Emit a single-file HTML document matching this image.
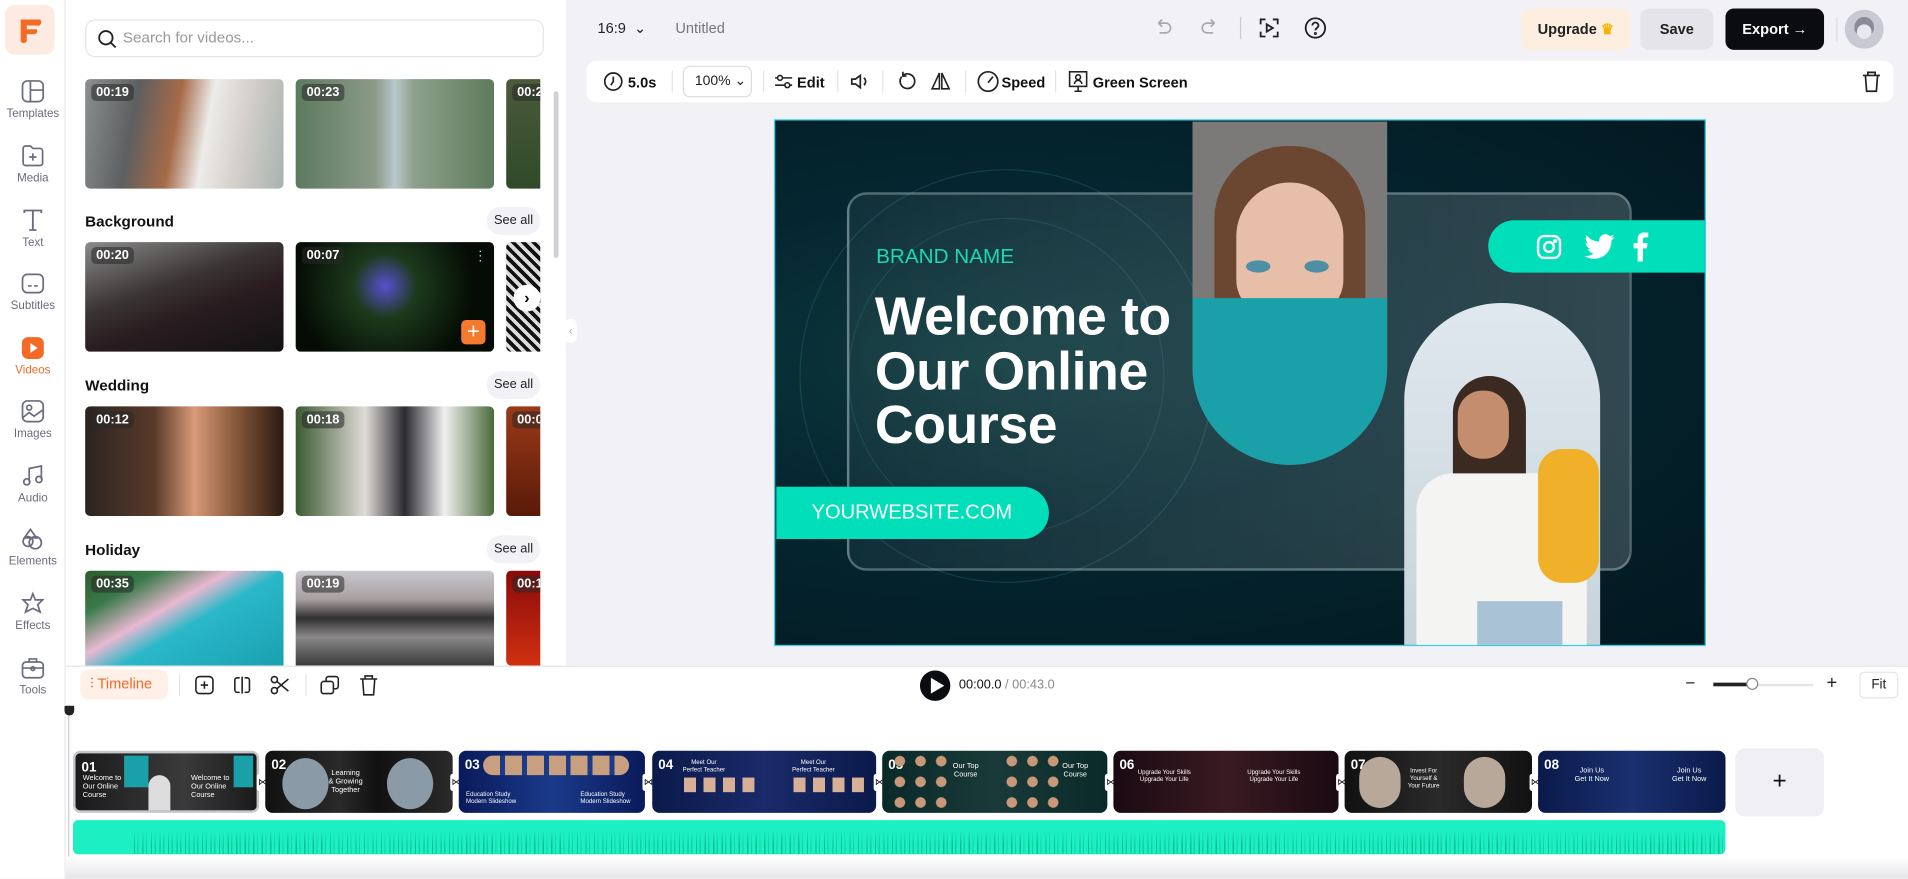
<!DOCTYPE html>
<html><head><meta charset="utf-8"><style>
*{box-sizing:border-box;margin:0;padding:0}
html,body{width:1908px;height:879px;overflow:hidden;background:#f2f2f6;font-family:"Liberation Sans",sans-serif}
#s{position:absolute;left:0;top:0;width:1568px;height:722px;transform:scale(1.21684);transform-origin:0 0;background:#f2f2f6}
.a{position:absolute}
.rail{left:0;top:0;width:54px;height:722px;background:#fff;border-right:1px solid #e8e8ee}
.ri{position:absolute;left:0;width:54px;text-align:center;font-size:9.5px;color:#6b6b80}
.ri svg{display:block;margin:0 auto 3px}
.panel{left:54px;top:0;width:411px;height:547px;background:#fff}
.th{position:absolute;width:163px;height:90px;border-radius:4px;overflow:hidden}
.th.c{width:28px;border-radius:4px 0 0 4px}
.du{position:absolute;left:5px;top:4px;background:rgba(40,40,40,.55);color:#fff;font-size:10.5px;font-weight:bold;padding:1px 4px;border-radius:4px}
.h{position:absolute;left:70px;font-size:12.5px;font-weight:bold;color:#111}
.sa{position:absolute;left:400px;width:44px;height:23px;border-radius:12px;background:#f2f2f6;font-size:10.5px;color:#222;text-align:center;line-height:23px}
.tb{font-size:12px;font-weight:bold;color:#111}
.clip{position:absolute;top:617px;height:51px;border-radius:6px;overflow:hidden}
.clip b{position:absolute;left:5px;top:6px;color:#fff;font-size:11px}
.clip i{position:absolute;font-style:normal;color:#fff;font-size:5px;line-height:6px;text-align:center}
.tr{position:absolute;top:636px;width:10px;height:14px;background:#fff;border-radius:2px;font-size:8px;line-height:14px;text-align:center;color:#111}
</style></head><body><div id="s">

<!-- top header -->
<div class="a" style="left:491px;top:16px;font-size:12px;color:#222">16:9 &nbsp;⌄</div>
<div class="a" style="left:555px;top:16px;font-size:12px;color:#777">Untitled</div>
<svg class="a" style="left:948px;top:15px" width="16" height="16" viewBox="0 0 16 16" fill="none" stroke="#aaa" stroke-width="1.4"><path d="M4 4h6a4 4 0 010 8H5M4 4l3-3M4 4l3 3"/></svg>
<svg class="a" style="left:986px;top:15px" width="16" height="16" viewBox="0 0 16 16" fill="none" stroke="#aaa" stroke-width="1.4"><path d="M12 4H6a4 4 0 000 8h5M12 4L9 1M12 4L9 7"/></svg>
<div class="a" style="left:1019px;top:14px;width:1px;height:18px;background:#ccc"></div>
<svg class="a" style="left:1034px;top:14px" width="18" height="18" viewBox="0 0 18 18" fill="none" stroke="#222" stroke-width="1.5"><path d="M2 6V2h4M12 2h4v4M16 12v4h-4M6 16H2v-4"/><path d="M7 6l5 3-5 3z"/></svg>
<svg class="a" style="left:1072px;top:14px" width="18" height="18" viewBox="0 0 18 18" fill="none" stroke="#222" stroke-width="1.5"><circle cx="9" cy="9" r="8"/><path d="M6.5 7a2.5 2.5 0 115 0c0 2-2.5 2-2.5 4"/><circle cx="9" cy="13.5" r=".5"/></svg>
<div class="a" style="left:1250px;top:7px;width:90px;height:34px;border-radius:7px;background:#fdeee0;font-size:12px;font-weight:bold;line-height:34px;text-align:center;color:#222">Upgrade <span style="color:#f5b400">♛</span></div>
<div class="a" style="left:1348px;top:7px;width:60px;height:34px;border-radius:7px;background:#e4e4ea;font-size:12px;font-weight:bold;line-height:34px;text-align:center;color:#222">Save</div>
<div class="a" style="left:1418px;top:7px;width:81px;height:34px;border-radius:7px;background:#0a0c10;font-size:12px;font-weight:bold;line-height:34px;text-align:center;color:#fff">Export →</div>
<div class="a" style="left:1509px;top:14px;width:1px;height:20px;background:#ddd"></div>
<div class="a" style="left:1516px;top:8px;width:32px;height:32px;border-radius:50%;background:#c9c9d4;overflow:hidden"><div class="a" style="left:8px;top:6px;width:16px;height:14px;border-radius:8px 8px 4px 4px;background:#8a8a98"></div><div class="a" style="left:10px;top:12px;width:12px;height:12px;border-radius:50%;background:#e8e8ee"></div></div>

<!-- toolbar -->
<div class="a" style="left:482px;top:50px;width:1074px;height:34px;background:#fff;border-radius:8px"></div>
<svg class="a" style="left:496px;top:59px" width="16" height="16" viewBox="0 0 16 16" fill="none" stroke="#222" stroke-width="1.4"><circle cx="8" cy="8" r="7"/><path d="M8 4v4l-2 3"/></svg>
<div class="a tb" style="left:516px;top:61px">5.0s</div>
<div class="a" style="left:552px;top:58px;width:1px;height:18px;background:#e4e4e4"></div>
<div class="a" style="left:561px;top:54px;width:57px;height:26px;border:1px solid #ddd;border-radius:6px;font-size:11.5px;line-height:24px;padding-left:9px;color:#222">100% ⌄</div>
<div class="a" style="left:627px;top:58px;width:1px;height:18px;background:#e4e4e4"></div>
<svg class="a" style="left:636px;top:59px" width="16" height="16" viewBox="0 0 16 16" fill="none" stroke="#222" stroke-width="1.3"><path d="M1 5h14M1 11h14"/><circle cx="5" cy="5" r="2" fill="#fff"/><circle cx="11" cy="11" r="2" fill="#fff"/></svg>
<div class="a tb" style="left:655px;top:61px">Edit</div>
<div class="a" style="left:688px;top:58px;width:1px;height:18px;background:#e4e4e4"></div>
<svg class="a" style="left:698px;top:59px" width="16" height="16" viewBox="0 0 16 16" fill="none" stroke="#222" stroke-width="1.4"><path d="M2 6h3l4-3v10l-4-3H2zM12 5a4 4 0 010 6"/></svg>
<div class="a" style="left:725px;top:58px;width:1px;height:18px;background:#e4e4e4"></div>
<svg class="a" style="left:737px;top:58px" width="16" height="18" viewBox="0 0 16 18" fill="none" stroke="#222" stroke-width="1.4"><path d="M5 4a6 6 0 11-1 1M5 1v3.5H8"/></svg>
<svg class="a" style="left:764px;top:58px" width="18" height="18" viewBox="0 0 18 18" fill="none" stroke="#222" stroke-width="1.3"><path d="M8 2L2 15h6zM10 2l6 13h-6z"/></svg>
<div class="a" style="left:793px;top:58px;width:1px;height:18px;background:#e4e4e4"></div>
<svg class="a" style="left:803px;top:58px" width="18" height="18" viewBox="0 0 18 18" fill="none" stroke="#222" stroke-width="1.4"><circle cx="9" cy="9" r="8"/><path d="M9 10l4-5"/></svg>
<div class="a tb" style="left:823px;top:61px">Speed</div>
<div class="a" style="left:867px;top:58px;width:1px;height:18px;background:#e4e4e4"></div>
<svg class="a" style="left:878px;top:57px" width="16" height="20" viewBox="0 0 16 20" fill="none" stroke="#222" stroke-width="1.3"><rect x="1" y="2" width="14" height="12"/><circle cx="8" cy="6.5" r="2"/><path d="M5 12a3 3 0 016 0M8 14v4M5 18h6"/></svg>
<div class="a tb" style="left:898px;top:61px">Green Screen</div>
<svg class="a" style="left:1530px;top:58px" width="16" height="18" viewBox="0 0 16 18" fill="none" stroke="#222" stroke-width="1.4"><path d="M1 4h14M5 4V1.5h6V4M3 4l1 13h8l1-13"/></svg>

<!-- canvas -->
<div class="a" style="left:636px;top:98px;width:766px;height:433px;border:1.5px solid #2ed3ea;background:radial-gradient(ellipse at 25% 45%,#0d3a3e 0%,#052630 40%,#021820 100%);overflow:hidden">
 <div class="a" style="left:20px;top:40px;width:340px;height:340px;border-radius:50%;border:1px solid rgba(60,140,140,.25)"></div>
 <div class="a" style="left:60px;top:80px;width:260px;height:260px;border-radius:50%;border:1px solid rgba(60,140,140,.2)"></div>
 <div class="a" style="left:59px;top:59px;width:645px;height:311px;border-radius:16px;border:2px solid rgba(200,220,220,.35);background:linear-gradient(90deg,rgba(255,255,255,.05),rgba(255,255,255,.18))"></div>
 <div class="a" style="left:343px;top:1px;width:160px;height:282px;border-radius:0 0 80px 80px;overflow:hidden;background:#7c7a78">
   <div class="a" style="left:18px;top:20px;width:124px;height:200px;border-radius:60px 60px 20px 20px;background:#6b4630"></div>
   <div class="a" style="left:36px;top:50px;width:88px;height:110px;border-radius:44px 44px 30px 30px;background:#e7bfa9"></div>
   <div class="a" style="left:44px;top:114px;width:20px;height:10px;border-radius:50%;background:#4f8fa6"></div>
   <div class="a" style="left:92px;top:114px;width:20px;height:10px;border-radius:50%;background:#4f8fa6"></div>
   <div class="a" style="left:0;top:145px;width:160px;height:140px;background:#1aa0a8"></div>
 </div>
 <div class="a" style="left:586px;top:82px;width:178px;height:43px;border-radius:22px 0 0 22px;background:#00dfb9"></div>
 <svg class="a" style="left:625px;top:93px" width="22" height="22" viewBox="0 0 22 22" fill="none" stroke="#fff" stroke-width="2"><rect x="2" y="2" width="18" height="18" rx="5"/><circle cx="11" cy="11" r="4"/><circle cx="16" cy="6" r=".8" fill="#fff"/></svg>
 <svg class="a" style="left:665px;top:93px" width="26" height="22" viewBox="0 0 24 20" fill="#fff"><path d="M23 2.5a9 9 0 01-2.7.7A4.7 4.7 0 0022.4.6a9 9 0 01-3 1.1A4.7 4.7 0 0011.4 6 13.3 13.3 0 011.7 1.1a4.7 4.7 0 001.5 6.3A4.6 4.6 0 011 6.8a4.7 4.7 0 003.8 4.6 4.7 4.7 0 01-2.1.1 4.7 4.7 0 004.4 3.3A9.4 9.4 0 010 16.7 13.3 13.3 0 007.2 19c8.6 0 13.4-7.2 13.4-13.4v-.6A9.5 9.5 0 0023 2.5z"/></svg>
 <svg class="a" style="left:704px;top:92px" width="14" height="24" viewBox="0 0 12 22" fill="#fff"><path d="M8 22V12h3l.5-4H8V5.5C8 4.4 8.3 3.7 10 3.7h2V.2A25 25 0 009 0C6.2 0 4 1.7 4 4.9V8H1v4h3v10z"/></svg>
 <div class="a" style="left:517px;top:150px;width:161px;height:282px;border-radius:80px 80px 0 0;overflow:hidden;background:linear-gradient(180deg,#dfe8ee,#c7d3da)">
   <div class="a" style="left:40px;top:60px;width:60px;height:120px;border-radius:30px;background:#3b2a22"></div>
   <div class="a" style="left:44px;top:72px;width:42px;height:56px;border-radius:20px;background:#c48e6e"></div>
   <div class="a" style="left:10px;top:140px;width:140px;height:150px;border-radius:30px 30px 0 0;background:#f4f4f2"></div>
   <div class="a" style="left:110px;top:120px;width:50px;height:110px;border-radius:20px;background:#f0b02a"></div>
   <div class="a" style="left:60px;top:245px;width:70px;height:40px;background:#a9c2d6"></div>
 </div>
 <div class="a" style="left:83px;top:102px;font-size:17px;color:#1ed8b2">BRAND NAME</div>
 <div class="a" style="left:82px;top:140px;font-size:44px;line-height:44.5px;color:#fff;font-weight:bold;letter-spacing:-.3px">Welcome to<br>Our Online<br>Course</div>
 <div class="a" style="left:1px;top:301px;width:224px;height:43px;border-radius:0 22px 22px 0;background:#00dfb9;color:#fff;font-size:16.5px;line-height:43px;padding-left:29px">YOURWEBSITE.COM</div>
</div>

<!-- left rail -->
<div class="a rail">
 <div class="a" style="left:4px;top:4px;width:41px;height:41px;border-radius:8px;background:#fdebe2"><svg width="41" height="41" viewBox="0 0 41 41" fill="#f36a26"><path d="M13 12h16a3 3 0 01-3 5h-8v3h8a2.5 2.5 0 01-2.5 4H18v6a3 3 0 01-5 0z"/></svg></div>
 <div class="ri" style="top:65px"><svg width="20" height="20" viewBox="0 0 20 20" fill="none" stroke="#6b6b80" stroke-width="1.4"><rect x="1.5" y="1.5" width="17" height="17" rx="4"/><path d="M8 1.5v17M8 9h10.5"/></svg>Templates</div>
 <div class="ri" style="top:118px"><svg width="20" height="20" viewBox="0 0 20 20" fill="none" stroke="#6b6b80" stroke-width="1.4"><path d="M2 4a2 2 0 012-2h4l2 2h6a2 2 0 012 2v10a2 2 0 01-2 2H4a2 2 0 01-2-2z"/><path d="M10 8v6M7 11h6"/></svg>Media</div>
 <div class="ri" style="top:171px"><svg width="20" height="20" viewBox="0 0 20 20" fill="none" stroke="#6b6b80" stroke-width="1.5"><path d="M3 4V2h14v2M10 2v16M7 18h6"/></svg>Text</div>
 <div class="ri" style="top:223px"><svg width="20" height="20" viewBox="0 0 20 20" fill="none" stroke="#6b6b80" stroke-width="1.4"><rect x="1.5" y="2.5" width="17" height="15" rx="4"/><path d="M6 12h3M11 12h3"/></svg>Subtitles</div>
 <div class="ri" style="top:276px;color:#f36a26"><svg width="20" height="20" viewBox="0 0 20 20"><rect x="1" y="1" width="18" height="18" rx="5" fill="#f36a26"/><path d="M8 6l6 4-6 4z" fill="#fff"/></svg>Videos</div>
 <div class="ri" style="top:328px"><svg width="20" height="20" viewBox="0 0 20 20" fill="none" stroke="#6b6b80" stroke-width="1.4"><rect x="1.5" y="1.5" width="17" height="17" rx="4"/><circle cx="7" cy="7" r="2"/><path d="M2 15l5-4 4 3 7-5"/></svg>Images</div>
 <div class="ri" style="top:381px"><svg width="20" height="20" viewBox="0 0 20 20" fill="none" stroke="#6b6b80" stroke-width="1.4"><path d="M7 15V4l10-2v11"/><circle cx="5" cy="15" r="2.5"/><circle cx="15" cy="13" r="2.5"/></svg>Audio</div>
 <div class="ri" style="top:433px"><svg width="20" height="20" viewBox="0 0 20 20" fill="none" stroke="#6b6b80" stroke-width="1.4"><path d="M8 2l5 7H3z"/><circle cx="12" cy="13" r="5"/><circle cx="6" cy="12" r="4"/></svg>Elements</div>
 <div class="ri" style="top:486px"><svg width="20" height="20" viewBox="0 0 20 20" fill="none" stroke="#6b6b80" stroke-width="1.4"><path d="M10 2l2 5 6 0-4 4 2 6-6-3-6 3 2-6-4-4 6 0z"/></svg>Effects</div>
 <div class="ri" style="top:539px"><svg width="20" height="20" viewBox="0 0 20 20" fill="none" stroke="#6b6b80" stroke-width="1.4"><rect x="1.5" y="5" width="17" height="13" rx="3"/><path d="M7 5V2.5h6V5M1.5 10h17"/><circle cx="10" cy="10.5" r="1.5"/></svg>Tools</div>
</div>

<!-- panel -->
<div class="a panel">
 <div class="a" style="left:16px;top:16px;width:377px;height:31px;border:1px solid #e4e4ea;border-radius:8px"></div>
 <svg class="a" style="left:26px;top:24px" width="16" height="16" viewBox="0 0 16 16" fill="none" stroke="#222" stroke-width="1.5"><circle cx="7" cy="7" r="5.5"/><path d="M11 11l4 4"/></svg>
 <div class="a" style="left:47px;top:24px;font-size:12.5px;color:#999">Search for videos...</div>
 <div class="a" style="left:401px;top:75px;width:4px;height:137px;border-radius:2px;background:#d0d0d6"></div>
</div>
<div class="a" style="left:464px;top:262px;width:10px;height:20px;border-radius:5px;background:#fff;color:#aaa;font-size:9px;line-height:20px;text-align:center">‹</div>

<div class="th" style="left:70px;top:65px;background:linear-gradient(100deg,#8c8f90 0%,#5d5f60 25%,#a66a48 45%,#ececea 60%,#d8d2cc 75%,#a8b2b0 100%)"><div class="du">00:19</div></div>
<div class="th" style="left:243px;top:65px;background:linear-gradient(90deg,#5c7a5e,#8c9a88 40%,#b8c8cc 50%,#8ca08a 60%,#5e7a5c)"><div class="du">00:23</div></div>
<div class="th c" style="left:416px;top:65px;background:linear-gradient(#4b5a3b,#2f4a2a)"><div class="du">00:2</div></div>

<div class="h" style="top:175px">Background</div><div class="sa" style="top:170px">See all</div>
<div class="th" style="left:70px;top:199px;background:linear-gradient(160deg,#8a8a8a 0%,#3a3434 40%,#2a1c20 60%,#121212 100%)"><div class="du">00:20</div></div>
<div class="th" style="left:243px;top:199px;background:radial-gradient(circle at 45% 40%,#5a4fd0 0%,#1c3a1c 25%,#050c05 70%)"><div class="du">00:07</div><div class="a" style="left:136px;top:64px;width:20px;height:20px;border-radius:4px;background:#f47a30;color:#fff;font-size:18px;line-height:19px;text-align:center">+</div><div class="a" style="left:150px;top:6px;color:#fff;font-size:10px;line-height:4px">·<br>·<br>·</div></div>
<div class="th c" style="left:416px;top:199px;background:repeating-linear-gradient(45deg,#111 0 3px,#ddd 3px 6px)"></div>
<div class="a" style="left:422px;top:234px;width:22px;height:22px;border-radius:50%;background:#fff;text-align:center;line-height:21px;font-size:13px;font-weight:bold">›</div>

<div class="h" style="top:310px">Wedding</div><div class="sa" style="top:305px">See all</div>
<div class="th" style="left:70px;top:334px;background:linear-gradient(90deg,#2a2420,#5a3a2a 35%,#d89a78 55%,#8a5a3c 75%,#2a1a12)"><div class="du">00:12</div></div>
<div class="th" style="left:243px;top:334px;background:linear-gradient(90deg,#3c5a32,#e0dcd8 35%,#2a2a30 55%,#f0f0f0 75%,#4a6a3a)"><div class="du">00:18</div></div>
<div class="th c" style="left:416px;top:334px;background:linear-gradient(#9a3a18,#5a1a08)"><div class="du">00:0</div></div>

<div class="h" style="top:445px">Holiday</div><div class="sa" style="top:440px">See all</div>
<div class="th" style="left:70px;top:469px;height:78px;border-radius:4px 4px 0 0;background:linear-gradient(150deg,#2e5a2a 0%,#3a7a4a 20%,#e8b8d0 40%,#2ab8c8 55%,#1aa0b0 100%)"><div class="du">00:35</div></div>
<div class="th" style="left:243px;top:469px;height:78px;border-radius:4px 4px 0 0;background:linear-gradient(180deg,#c8c8d0 0%,#a8a0a0 30%,#303030 50%,#8a8888 70%,#3a3a3a 100%)"><div class="du">00:19</div></div>
<div class="th c" style="left:416px;top:469px;height:78px;background:linear-gradient(#8a0a0a,#d03010)"><div class="du">00:1</div></div>

<!-- timeline panel -->
<div class="a" style="left:54px;top:547px;width:1514px;height:175px;background:#fff;border-top:1px solid #e4e4ea"></div>
<div class="a" style="left:66px;top:550px;width:72px;height:25px;border-radius:7px;background:#fff0e8;color:#f36a26;font-size:12px;line-height:25px;padding-left:8px">⫶ Timeline</div>
<div class="a" style="left:147px;top:554px;width:1px;height:18px;background:#e4e4e4"></div>
<svg class="a" style="left:160px;top:555px" width="16" height="16" viewBox="0 0 16 16" fill="none" stroke="#222" stroke-width="1.3"><rect x="1" y="1" width="14" height="14" rx="3"/><path d="M8 5v6M5 8h6"/></svg>
<svg class="a" style="left:191px;top:555px" width="16" height="16" viewBox="0 0 16 16" fill="none" stroke="#222" stroke-width="1.3"><path d="M8 1v14M6 2H4a2 2 0 00-2 2v8a2 2 0 002 2h2M10 2h2a2 2 0 012 2v8a2 2 0 01-2 2h-2"/></svg>
<svg class="a" style="left:222px;top:555px" width="16" height="16" viewBox="0 0 16 16" fill="none" stroke="#222" stroke-width="1.3"><circle cx="3.5" cy="3.5" r="2.5"/><circle cx="3.5" cy="12.5" r="2.5"/><path d="M5.5 5L15 13M5.5 11L15 3"/></svg>
<div class="a" style="left:251px;top:554px;width:1px;height:18px;background:#e4e4e4"></div>
<svg class="a" style="left:263px;top:555px" width="16" height="16" viewBox="0 0 16 16" fill="none" stroke="#222" stroke-width="1.3"><rect x="1" y="5" width="10" height="10" rx="2"/><path d="M5 5V3a2 2 0 012-2h6a2 2 0 012 2v6a2 2 0 01-2 2h-2"/></svg>
<svg class="a" style="left:295px;top:554px" width="16" height="18" viewBox="0 0 16 18" fill="none" stroke="#222" stroke-width="1.3"><path d="M1 4h14M5 4V1.5h6V4M3 4l1 13h8l1-13"/></svg>
<div class="a" style="left:756px;top:551px;width:25px;height:25px;border-radius:50%;background:#0a0c10"></div>
<svg class="a" style="left:764px;top:557px" width="12" height="13" viewBox="0 0 12 13"><path d="M1 0l11 6.5L1 13z" fill="#fff"/></svg>
<div class="a" style="left:788px;top:557px;font-size:10.5px;color:#111">00:00.0 <span style="color:#888">/ 00:43.0</span></div>
<div class="a" style="left:1385px;top:553px;font-size:14px;color:#222">−</div>
<div class="a" style="left:1408px;top:562px;width:82px;height:2px;background:#e4e4ea"></div>
<div class="a" style="left:1408px;top:561px;width:32px;height:3px;background:#222"></div>
<div class="a" style="left:1435px;top:557px;width:10px;height:10px;border-radius:50%;background:#fff;border:1px solid #888"></div>
<div class="a" style="left:1501px;top:553px;font-size:15px;color:#222">+</div>
<div class="a" style="left:1528px;top:552px;width:32px;height:22px;border:1px solid #e4e4ea;border-radius:4px;font-size:11px;line-height:20px;text-align:center;color:#222">Fit</div>

<div class="a" style="left:56px;top:588px;width:1px;height:134px;background:#ccc"></div>
<div class="a" style="left:53px;top:580px;width:8px;height:8px;background:#222;border-radius:1px 1px 4px 4px"></div>

<!-- clips -->
<div class="clip" style="left:60px;width:153px;border:2.5px solid #c4c8cc;background:linear-gradient(90deg,#1a1a1a,#3a3a3a 60%,#1a1a1a)"><b>01</b><i style="left:6px;top:18px;font-size:6px;line-height:7px;text-align:left">Welcome to<br>Our Online<br>Course</i><div class="a" style="left:40px;top:2px;width:20px;height:26px;background:#1aa0a8"></div><div class="a" style="left:60px;top:18px;width:18px;height:30px;border-radius:9px 9px 0 0;background:#ddd"></div><i style="left:95px;top:18px;font-size:6px;line-height:7px;text-align:left">Welcome to<br>Our Online<br>Course</i><div class="a" style="left:130px;top:2px;width:16px;height:26px;background:#1aa0a8"></div></div>
<div class="tr" style="left:211px">⋈</div>
<div class="clip" style="left:218px;width:154px;background:linear-gradient(90deg,#111,#2a2a2a 40%,#111 60%,#2a2a2a)"><b>02</b><div class="a" style="left:14px;top:6px;width:38px;height:42px;border-radius:50%;background:#8a9aa6"></div><i style="left:52px;top:16px;font-size:6px;line-height:7px">Learning<br>&amp; Growing<br>Together</i><div class="a" style="left:100px;top:6px;width:38px;height:42px;border-radius:50%;background:#8a9aa6"></div></div>
<div class="tr" style="left:370px">⋈</div>
<div class="clip" style="left:377px;width:153px;background:linear-gradient(90deg,#0a1a5a,#1a3a8a 50%,#0a1a5a)"><b>03</b><div class="a" style="left:20px;top:4px;width:120px;height:16px;background:repeating-linear-gradient(90deg,#c8a080 0 14px,#1a3a8a 14px 18px);border-radius:8px"></div><i style="left:6px;top:33px;text-align:left">Education Study<br>Modern Slideshow</i><i style="left:100px;top:33px;text-align:left">Education Study<br>Modern Slideshow</i></div>
<div class="tr" style="left:528px">⋈</div>
<div class="clip" style="left:536px;width:184px;background:linear-gradient(90deg,#0a1a4a,#1a2a6a 50%,#0a1a4a)"><b>04</b><i style="left:25px;top:7px">Meet Our<br>Perfect Teacher</i><i style="left:115px;top:7px">Meet Our<br>Perfect Teacher</i><div class="a" style="left:26px;top:22px;width:58px;height:12px;background:repeating-linear-gradient(90deg,#d8b098 0 10px,transparent 10px 16px)"></div><div class="a" style="left:116px;top:22px;width:58px;height:12px;background:repeating-linear-gradient(90deg,#d8b098 0 10px,transparent 10px 16px)"></div></div>
<div class="tr" style="left:718px">⋈</div>
<div class="clip" style="left:725px;width:185px;background:linear-gradient(90deg,#0a2a2a,#1a3a3a 50%,#0a2a2a)"><b>05</b><div class="a" style="left:6px;top:0;width:50px;height:51px;background:radial-gradient(circle,#c89878 35%,transparent 37%) 0 0/17px 17px"></div><i style="left:58px;top:10px;font-size:6px;line-height:7px">Our Top<br>Course</i><div class="a" style="left:98px;top:0;width:50px;height:51px;background:radial-gradient(circle,#c89878 35%,transparent 37%) 0 0/17px 17px"></div><i style="left:148px;top:10px;font-size:6px;line-height:7px">Our Top<br>Course</i></div>
<div class="tr" style="left:908px">⋈</div>
<div class="clip" style="left:915px;width:185px;background:linear-gradient(90deg,#1a0a12,#3a1a22 50%,#1a0a12)"><b>06</b><i style="left:20px;top:15px">Upgrade Your Skills<br>Upgrade Your Life</i><i style="left:110px;top:15px">Upgrade Your Skills<br>Upgrade Your Life</i></div>
<div class="tr" style="left:1098px">⋈</div>
<div class="clip" style="left:1105px;width:154px;background:linear-gradient(90deg,#111,#2a2a2a 50%,#111)"><b>07</b><div class="a" style="left:12px;top:5px;width:34px;height:42px;border-radius:17px;background:#b8a89a"></div><i style="left:52px;top:14px">Invest For<br>Yourself &amp;<br>Your Future</i><div class="a" style="left:98px;top:5px;width:34px;height:42px;border-radius:17px;background:#b8a89a"></div></div>
<div class="tr" style="left:1257px">⋈</div>
<div class="clip" style="left:1264px;width:154px;background:linear-gradient(90deg,#0a1a4a,#1a3070 50%,#0a1a4a)"><b>08</b><i style="left:30px;top:14px;font-size:6px;line-height:7px">Join Us<br>Get It Now</i><i style="left:110px;top:14px;font-size:6px;line-height:7px">Join Us<br>Get It Now</i></div>
<div class="a" style="left:1426px;top:615px;width:73px;height:56px;border-radius:8px;background:#f0f0f4;font-size:20px;text-align:center;line-height:54px;color:#111">+</div>

<!-- audio -->
<div class="a" style="left:60px;top:674px;width:1358px;height:28px;border-radius:4px;background:#1cf0c2;overflow:hidden">
 <div class="a" style="left:50px;bottom:0;width:1308px;height:20px;background:repeating-linear-gradient(90deg,rgba(0,150,110,.55) 0 1px,transparent 1px 3px,rgba(0,150,110,.35) 3px 4px,transparent 4px 7px);-webkit-mask:linear-gradient(0deg,#000 40%,transparent)"></div>
</div>
<div class="a" style="left:54px;top:704px;width:1514px;height:18px;background:linear-gradient(#fff,#e6e6ea)"></div>
</div></body></html>
